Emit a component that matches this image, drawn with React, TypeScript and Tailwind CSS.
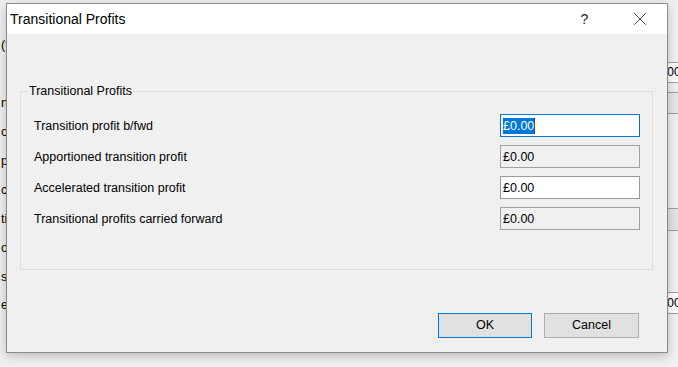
import { X } from "lucide-react";

const font = { fontFamily: '"Liberation Sans", Arial, sans-serif' };

interface FieldRow {
  label: string;
  value: string;
  readOnly: boolean;
  focused?: boolean;
}

const rows: FieldRow[] = [
  { label: "Transition profit b/fwd", value: "£0.00", readOnly: false, focused: true },
  { label: "Apportioned transition profit", value: "£0.00", readOnly: true },
  { label: "Accelerated transition profit", value: "£0.00", readOnly: false },
  { label: "Transitional profits carried forward", value: "£0.00", readOnly: true },
];

const backLabels = [
  { text: "(t", top: 38 },
  { text: "n", top: 96 },
  { text: "ol", top: 125 },
  { text: "p", top: 154 },
  { text: "c", top: 183 },
  { text: "ti", top: 212 },
  { text: "ov", top: 241 },
  { text: "s", top: 270 },
  { text: "es", top: 298 },
];

function BackgroundWindow() {
  return (
    <div className="absolute inset-0 bg-[#f0f0f0] text-[12.5px] text-black">
      {backLabels.map((l) => (
        <span key={l.top} className="absolute left-[1px] leading-[15px]" style={{ top: l.top }}>
          {l.text}
        </span>
      ))}
      <div className="absolute left-[650px] top-[62px] flex h-[21px] w-[40px] items-center justify-end border border-[#a0a0a0] bg-white pr-[8px]">
        £0.00
      </div>
      <div className="absolute left-[650px] top-[92px] h-[22px] w-[40px] border-y border-[#a0a0a0] bg-[#e6e6e6]" />
      <div className="absolute left-[650px] top-[208px] h-[23px] w-[40px] border-y border-[#a0a0a0] bg-[#e3e3e3]" />
      <div className="absolute left-[650px] top-[292px] flex h-[22px] w-[40px] items-center justify-end border border-[#a0a0a0] bg-white pr-[8px]">
        £0.00
      </div>
    </div>
  );
}

function ValueBox({ row }: { row: FieldRow }) {
  const boxClass = row.focused
    ? "border-[#0078d7] bg-white"
    : row.readOnly
      ? "border-[#a0a0a0] bg-[#f0f0f0]"
      : "border-[#9a9a9a] bg-white";

  return (
    <div className={["flex h-[23px] w-[140px] items-center border pl-[2px]", boxClass].join(" ")}>
      {row.focused ? (
        <>
          <span className="bg-[#0078d7] leading-[16px] text-white">{row.value}</span>
          <span className="h-[16px] w-px bg-[#5a3a1a]" />
        </>
      ) : (
        <span className="leading-[16px]">{row.value}</span>
      )}
    </div>
  );
}

function App() {
  return (
    <div className="relative h-[367px] w-[678px] overflow-hidden text-black" style={font}>
      <BackgroundWindow />

      <div className="absolute left-[6px] top-[3px] flex h-[350px] w-[662px] flex-col border border-[#8a8a8a] bg-[#f0f0f0] shadow-[0_3px_10px_rgba(0,0,0,0.22)]">
        <div className="flex h-[30px] shrink-0 items-center bg-white">
          <span className="flex-1 pl-[3px] text-[14px]">Transitional Profits</span>
          <span className="flex w-[55px] justify-center text-[14px] text-[#222]">?</span>
          <span className="flex w-[55px] justify-center">
            <X size={22} strokeWidth={0.9} color="#222" />
          </span>
        </div>

        <div className="flex flex-1 flex-col pl-[13px] pr-[14px] pt-[49px] text-[12.5px]">
          <fieldset className="h-[187px] border border-[#dcdcdc] pl-[13px] pr-[12px] pt-[15px]">
            <legend className="-ml-[6px] px-[1px] leading-[16px]">Transitional Profits</legend>
            <div className="grid grid-cols-[1fr_140px] gap-y-[8px]">
              {rows.map((row) => (
                <div key={row.label} className="contents">
                  <span className="flex items-center leading-[16px]">{row.label}</span>
                  <ValueBox row={row} />
                </div>
              ))}
            </div>
          </fieldset>

          <div className="mt-[43px] flex justify-end gap-[12px] pr-[14px]">
            <button className="h-[25px] w-[94px] border border-[#0078d7] bg-[#e1e1e1] text-[12.5px]">
              OK
            </button>
            <button className="h-[25px] w-[95px] border border-[#adadad] bg-[#e1e1e1] text-[12.5px]">
              Cancel
            </button>
          </div>
        </div>
      </div>
    </div>
  );
}

export default App;
